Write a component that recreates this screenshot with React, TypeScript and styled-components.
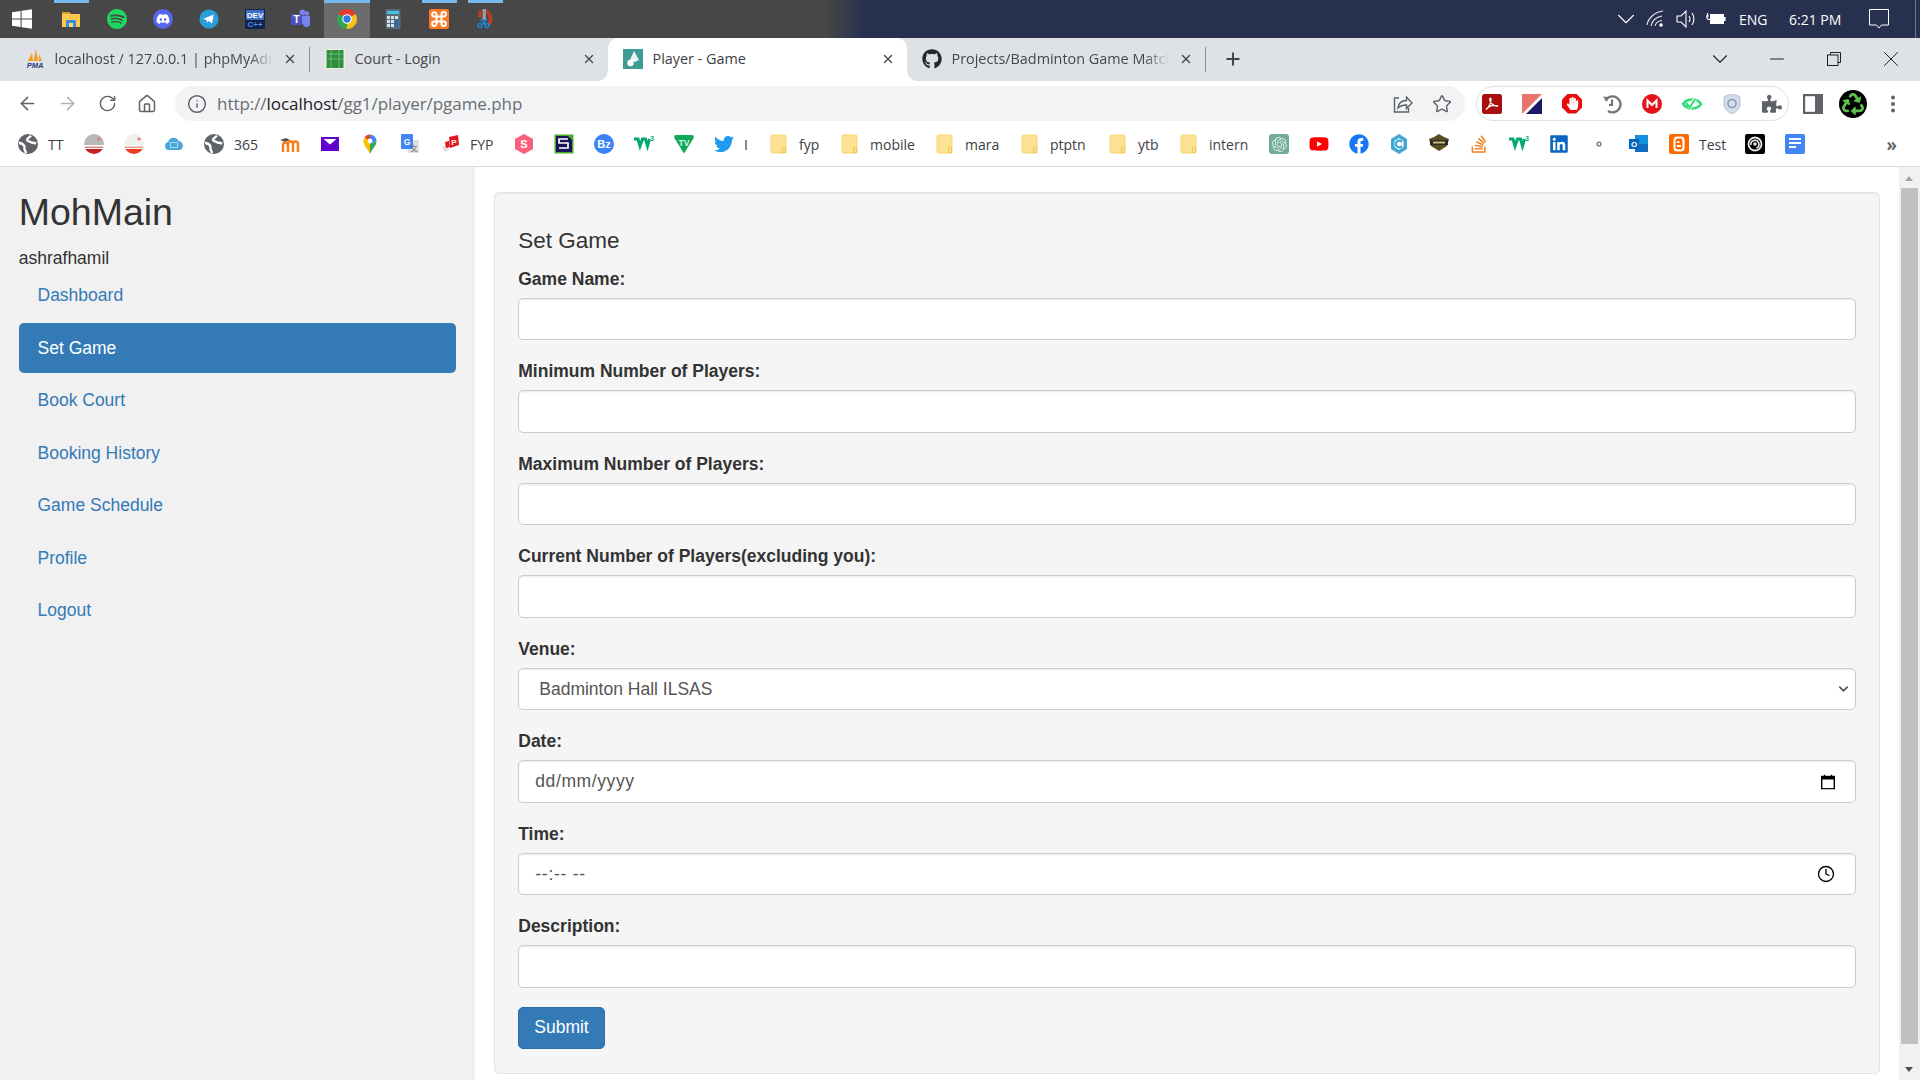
import React from "react";
import styled, { createGlobalStyle, css } from "styled-components";
import { ArrowLeft, ArrowRight, RotateCw, Home, Info, Star, X, Plus, ChevronDown, Minus, Clock } from "lucide-react";
import { FaGithub, FaTwitter, FaFacebook, FaYoutube, FaLinkedin, FaStackOverflow, FaPuzzlePiece, FaHandPaper, FaRecycle, FaDiscord } from "react-icons/fa";
import { SiSpotify, SiOpenai } from "react-icons/si";

const Global = createGlobalStyle`
  html, body { margin: 0; padding: 0; height: 100%; overflow: hidden; background: #fff; }
  * { box-sizing: border-box; }
  body { font-family: "Liberation Sans", Arial, sans-serif; color: #333; }
`;

const Shell = styled.div`
  display: flex;
  flex-direction: column;
  height: 100vh;
  overflow: hidden;
`;

/* ---------- OS taskbar ---------- */
const Taskbar = styled.div`
  display: flex;
  align-items: stretch;
  height: 38px;
  flex: none;
  background: linear-gradient(90deg, #474747 0, #474747 825px, #27314f 865px, #27304f 100%);
`;
const StartButton = styled.div`
  width: 48px;
  padding-right: 4px;
  display: flex;
  align-items: center;
  justify-content: center;
`;
const TaskItem = styled.div<{ $open?: boolean; $active?: boolean }>`
  position: relative;
  width: 46px;
  display: flex;
  align-items: center;
  justify-content: center;
  ${(p) => p.$active && css`background: #6b6b6b;`}
  ${(p) =>
    p.$open &&
    css`
      &::before {
        content: "";
        position: absolute;
        top: 0;
        left: ${p.$active ? "0" : "6px"};
        right: ${p.$active ? "0" : "5px"};
        height: 3px;
        background: #76b9ed;
      }
    `}
`;
const Tray = styled.div`
  margin-left: auto;
  display: flex;
  align-items: center;
  color: #fff;
  font-family: "Open Sans", sans-serif;
  font-size: 14px;
  padding-right: 4px;
`;
const TrayIcon = styled.span<{ $ml?: number }>`
  display: flex;
  width: 20px;
  justify-content: center;
  margin-left: ${(p) => p.$ml ?? 10}px;
`;
const TrayText = styled.span<{ $ml: number; $w: number }>`
  margin-left: ${(p) => p.$ml}px;
  width: ${(p) => p.$w}px;
  white-space: nowrap;
`;
const TrayEdge = styled.span`
  align-self: stretch;
  width: 1px;
  margin-left: 26px;
  background: #6f7689;
`;

/* ---------- Tabs ---------- */
const TabStrip = styled.div`
  display: flex;
  align-items: stretch;
  height: 43px;
  flex: none;
  background: #dee1e6;
  padding-left: 10px;
`;
const Tab = styled.div<{ $active?: boolean; $w: number }>`
  position: relative;
  width: ${(p) => p.$w}px;
  display: flex;
  align-items: center;
  padding: 0 12px 2px 14.5px;
  gap: 10px;
  font-family: "Open Sans", sans-serif;
  font-size: 14.4px;
  color: #45474a;
  ${(p) =>
    p.$active &&
    css`
      background: #fff;
      border-radius: 10px 10px 0 0;
      color: #3c4043;
      &::before,
      &::after {
        content: "";
        position: absolute;
        bottom: 0;
        width: 10px;
        height: 10px;
      }
      &::before {
        left: -10px;
        background: radial-gradient(circle at 0 0, #dee1e6 9.5px, #fff 10px);
      }
      &::after {
        right: -10px;
        background: radial-gradient(circle at 100% 0, #dee1e6 9.5px, #fff 10px);
      }
    `}
`;
const TabTitle = styled.span<{ $fade?: boolean }>`
  flex: 1;
  min-width: 0;
  white-space: nowrap;
  overflow: hidden;
  ${(p) =>
    p.$fade &&
    css`
      mask-image: linear-gradient(90deg, #000 calc(100% - 24px), transparent);
    `}
`;
const TabClose = styled.span`
  display: flex;
  color: #45474a;
  width: 14px;
  justify-content: center;
`;
const TabDivider = styled.span`
  width: 1px;
  height: 25px;
  margin-top: 9px;
  background: #8e9196;
  flex: none;
`;
const NewTab = styled.span`
  display: flex;
  align-items: center;
  margin-left: 17px;
  padding-bottom: 2px;
  color: #45474a;
`;
const WindowControls = styled.div`
  margin-left: auto;
  display: flex;
  align-items: stretch;
`;
const WinButton = styled.span<{ $w: number; $mr?: number }>`
  width: ${(p) => p.$w}px;
  margin-right: ${(p) => p.$mr ?? 0}px;
  padding-bottom: 2px;
  display: flex;
  align-items: center;
  justify-content: center;
  color: #222;
`;

/* ---------- Toolbar ---------- */
const Toolbar = styled.div`
  display: flex;
  align-items: center;
  height: 47px;
  flex: none;
  background: #fff;
  padding: 0 7px 2px;
`;
const NavButton = styled.span<{ $off?: boolean }>`
  width: 40px;
  display: flex;
  justify-content: center;
  color: ${(p) => (p.$off ? "#b0b3b7" : "#5f6368")};
`;
const Omnibox = styled.div`
  flex: 1;
  height: 35px;
  margin-left: 8px;
  display: flex;
  align-items: center;
  background: #f1f3f4;
  border-radius: 18px;
  padding: 0 13px 0 12px;
  color: #5f6368;
`;
const Url = styled.div`
  flex: 1;
  margin-left: 10px;
  font-family: "Open Sans", sans-serif;
  font-size: 17px;
  letter-spacing: -0.05px;
  color: #6a6d71;
  white-space: nowrap;
`;
const UrlHost = styled.span`
  color: #202124;
`;
const OmniAction = styled.span`
  display: flex;
  margin-left: 19px;
  color: #5f6368;
`;
const ExtensionPill = styled.div`
  margin-left: 11px;
  width: 313px;
  height: 35px;
  border: 1.5px solid #dfe1e5;
  border-radius: 18px;
  padding: 0 5px;
  display: flex;
  align-items: center;
  gap: 20px;
  margin-right: 4px;
`;

/* ---------- Bookmarks ---------- */
const BookmarkBar = styled.div`
  display: flex;
  align-items: center;
  height: 39px;
  flex: none;
  padding: 0 0 6px 8px;
  background: #fff;
  border-bottom: 1px solid #dadce0;
  font-family: "Open Sans", sans-serif;
  font-size: 14px;
  color: #3c4043;
`;
const Bookmark = styled.div`
  display: flex;
  align-items: center;
  padding: 0 10px;
  gap: 10px;
  flex: none;
`;
const BookmarkLabel = styled.span<{ $w: number }>`
  width: ${(p) => p.$w}px;
  white-space: nowrap;
`;
const MoreBookmarks = styled.span`
  margin-left: auto;
  padding-right: 23px;
  font-size: 17px;
  font-weight: 700;
  color: #5f6368;
`;

/* ---------- Round badge for logos ---------- */
const Badge = styled.span<{ $bg: string; $fg?: string; $r?: string; $size?: number }>`
  width: ${(p) => p.$size ?? 20}px;
  height: ${(p) => p.$size ?? 20}px;
  flex: none;
  display: flex;
  align-items: center;
  justify-content: center;
  background: ${(p) => p.$bg};
  color: ${(p) => p.$fg ?? "#fff"};
  border-radius: ${(p) => p.$r ?? "50%"};
`;
const OctagonBadge = styled(Badge)`
  border-radius: 0;
  clip-path: polygon(30% 0, 70% 0, 100% 30%, 100% 70%, 70% 100%, 30% 100%, 0 70%, 0 30%);
`;

/* ---------- Web page ---------- */
const Viewport = styled.div`
  flex: 1;
  min-height: 0;
  display: flex;
`;
const Sidebar = styled.aside`
  width: 474.75px;
  flex: none;
  background: #f1f1f1;
  padding: 25px 18.75px 0;
`;
const Brand = styled.h2`
  margin: 0 0 12.5px;
  font-size: 37.5px;
  line-height: 41.25px;
  font-weight: 500;
  color: #333;
`;
const UserName = styled.div`
  font-size: 17.5px;
  line-height: 25px;
  color: #333;
`;
const NavList = styled.ul`
  list-style: none;
  margin: 0;
  padding: 0;
  display: flex;
  flex-direction: column;
  gap: 2.5px;
`;
const NavLink = styled.a<{ $active?: boolean }>`
  display: block;
  padding: 12.5px 18.75px;
  font-size: 17.5px;
  line-height: 25px;
  border-radius: 5px;
  color: ${(p) => (p.$active ? "#fff" : "#337ab7")};
  background: ${(p) => (p.$active ? "#337ab7" : "transparent")};
`;
const Main = styled.main`
  flex: 1;
  min-width: 0;
  background: #fff;
  padding: 25px 18.75px 0;
`;
const Well = styled.section`
  background: #f5f5f5;
  border: 1.25px solid #e3e3e3;
  border-radius: 5px;
  box-shadow: inset 0 1.25px 1.25px rgba(0, 0, 0, 0.05);
  padding: 23.75px;
`;
const FormTitle = styled.h4`
  margin: 12.5px 0;
  font-size: 22.5px;
  line-height: 24.75px;
  font-weight: 500;
  color: #333;
`;
const FormGroup = styled.div`
  margin-bottom: 18.75px;
`;
const FieldLabel = styled.label`
  display: block;
  font-size: 17.5px;
  line-height: 25px;
  font-weight: 700;
  margin-bottom: 6.25px;
  color: #333;
`;
const FieldWrap = styled.div`
  position: relative;
`;
const fieldStyle = css`
  display: block;
  width: 100%;
  height: 42.5px;
  padding: 7.5px 15px;
  font-family: "Liberation Sans", Arial, sans-serif;
  font-size: 17.5px;
  color: #555;
  background: #fff;
  border: 1.25px solid #ccc;
  border-radius: 5px;
  box-shadow: inset 0 1.25px 1.25px rgba(0, 0, 0, 0.075);
  outline: none;
  &::placeholder {
    color: #555;
    opacity: 1;
  }
`;
const TextField = styled.input`
  ${fieldStyle}
`;
const TemporalField = styled.input<{ $spacing: number }>`
  ${fieldStyle}
  padding-left: 16px;
  letter-spacing: ${(p) => p.$spacing}px;
`;
const SelectField = styled.select`
  ${fieldStyle}
  appearance: none;
  padding-left: 20px;
`;
const FieldIcon = styled.span<{ $right: number; $color: string }>`
  position: absolute;
  top: 50%;
  right: ${(p) => p.$right}px;
  transform: translateY(-50%);
  display: flex;
  color: ${(p) => p.$color};
  pointer-events: none;
`;
const SubmitButton = styled.button`
  display: block;
  height: 42.5px;
  padding: 7.5px 15px;
  font-family: "Liberation Sans", Arial, sans-serif;
  font-size: 17.5px;
  color: #fff;
  background: #337ab7;
  border: 1.25px solid #2e6da4;
  border-radius: 5px;
`;
const ScrollTrack = styled.div`
  position: relative;
  width: 21px;
  flex: none;
  background: #f1f1f1;
`;
const ScrollThumb = styled.div`
  position: absolute;
  left: 2px;
  right: 2px;
  top: 21px;
  height: 856px;
  background: #c1c1c1;
`;
const ScrollArrow = styled.span<{ $dir: "up" | "down" }>`
  position: absolute;
  left: 6px;
  width: 0;
  height: 0;
  border-left: 4.5px solid transparent;
  border-right: 4.5px solid transparent;
  ${(p) =>
    p.$dir === "up"
      ? css`
          top: 9px;
          border-bottom: 5px solid #a3a3a3;
        `
      : css`
          bottom: 8px;
          border-top: 5px solid #505050;
        `}
`;

/* ---------- Drawn logos ---------- */
const Svg: React.FC<{ children: React.ReactNode; size?: number }> = ({ children, size = 20 }) => (
  <svg width={size} height={size} viewBox="0 0 20 20" style={{ flex: "none", display: "block" }}>
    {children}
  </svg>
);

const WindowsLogo = () => (
  <Svg>
    <g fill="#fff">
      <polygon points="0,3.2 8.6,2 8.6,9.6 0,9.6" />
      <polygon points="9.6,1.8 20,0.3 20,9.6 9.6,9.6" />
      <polygon points="0,10.6 8.6,10.6 8.6,18 0,16.8" />
      <polygon points="9.6,10.6 20,10.6 20,19.8 9.6,18.3" />
    </g>
  </Svg>
);
const ExplorerLogo = () => (
  <Svg>
    <path d="M1 3h7l2 2h9v13H1z" fill="#fcc94f" />
    <path d="M1 3h7l1.6 2H1z" fill="#d99e2c" />
    <rect x="5" y="11" width="10" height="7" fill="#3d8bd6" />
    <rect x="8" y="14" width="4" height="4" fill="#fcd97a" />
  </Svg>
);
const TelegramLogo = () => (
  <Svg>
    <circle cx="10" cy="10" r="9.6" fill="#2b9ed9" />
    <path d="M4 10l10.7-4.4-1.6 9-3.5-2.6-1.7 1.8-.3-2.9z" fill="#fff" />
  </Svg>
);
const DevLogo = () => (
  <Svg>
    <rect x="0" y="0" width="20" height="20" fill="#14224a" />
    <rect x="1" y="1" width="18" height="10" fill="#3f6fc4" />
    <text x="10" y="9" textAnchor="middle" fontSize="8" fontWeight="700" fontFamily="Liberation Sans" fill="#fff">DEV</text>
    <text x="10" y="17.5" textAnchor="middle" fontSize="8" fontWeight="700" fontFamily="Liberation Sans" fill="#4c8fe8">C++</text>
  </Svg>
);
const TeamsLogo = () => (
  <Svg>
    <circle cx="16" cy="4.5" r="2.2" fill="#7b83eb" />
    <circle cx="11.5" cy="3.5" r="3" fill="#7b83eb" />
    <path d="M10 7h9v7a3.5 3.5 0 0 1-7 1l-2-1z" fill="#7b83eb" />
    <rect x="0" y="5" width="11" height="11" rx="1" fill="#4b53bc" />
    <text x="5.5" y="14" textAnchor="middle" fontSize="10" fontWeight="700" fontFamily="Liberation Sans" fill="#fff">T</text>
  </Svg>
);
const ChromeLogo = () => (
  <Svg>
    <path d="M10 10L1.34 5A10 10 0 0 1 18.66 5z" fill="#e33b2e" />
    <path d="M10 10L18.66 5A10 10 0 0 1 10 20z" fill="#fbc116" />
    <path d="M10 10L10 20A10 10 0 0 1 1.34 5z" fill="#2fa84f" />
    <circle cx="10" cy="10" r="4.8" fill="#fff" />
    <circle cx="10" cy="10" r="3.7" fill="#2f7ee8" />
  </Svg>
);
const CalculatorLogo = () => (
  <Svg>
    <rect x="2.5" y="0" width="15" height="20" rx="1" fill="#5b6b79" />
    <rect x="4" y="2" width="12" height="3" fill="#3cc7ea" />
    <g fill="#d8dee3">
      {[4, 8, 12].flatMap((x) => [7, 11, 15].map((y) => <rect key={`${x}-${y}`} x={x} y={y} width="3" height="3" />))}
    </g>
    <rect x="12" y="11" width="3" height="7" fill="#1e6fb8" />
  </Svg>
);
const XamppLogo = () => (
  <Svg>
    <rect width="20" height="20" rx="2" fill="#fb7a24" />
    <path d="M7.5 7.5H6a2.2 2.2 0 1 1 1.500-2.200V14.700A2.200 2.200 0 1 1 5.300 12.500H14.700A2.200 2.200 0 1 1 12.500 14.700V5.300A2.200 2.200 0 1 1 14.700 7.500H7.500" fill="none" stroke="#fff" strokeWidth="2" />
  </Svg>
);
const SnipLogo = () => (
  <Svg>
    <path d="M8 1.2a9 9 0 0 1 6 14" fill="none" stroke="#c23a1e" strokeWidth="3.5" />
    <path d="M5 1.5v7" stroke="#c23a1e" strokeWidth="3" />
    <rect x="7.5" y="0" width="3.5" height="11" fill="#9a9a9a" />
    <path d="M5 10l5 5M12 10l-4 5" stroke="#1b86d6" strokeWidth="1.4" />
    <circle cx="5" cy="16.5" r="2" fill="none" stroke="#1b86d6" strokeWidth="1.6" />
    <circle cx="12" cy="16.5" r="2" fill="none" stroke="#1b86d6" strokeWidth="1.6" />
  </Svg>
);
const PmaLogo = () => (
  <Svg>
    <path d="M3 12L7 4l1 8zM8.5 12L11 0l2 12zM13.5 12L14 5l3 7z" fill="#f39a1f" />
    <text x="10" y="19" textAnchor="middle" fontSize="7.5" fontWeight="700" fontStyle="italic" fontFamily="Liberation Sans" fill="#25407a">PMA</text>
  </Svg>
);
const CourtLogo = () => (
  <Svg>
    <rect x="0" y="0" width="20" height="20" fill="#eef2d8" />
    <rect x="1.5" y="1" width="17" height="18" fill="#2e8f3e" />
    <path d="M1.5 5h17M1.5 10h17M6 1v18M14 1v18" stroke="#7cc785" strokeWidth=".8" />
  </Svg>
);
const ShuttleLogo = () => (
  <Svg>
    <rect width="20" height="20" fill="#3f9b94" />
    <path d="M11 2l5 9-4 2-5-2z" fill="#eaf4f2" />
    <circle cx="7.5" cy="14" r="3.2" fill="#fff" />
  </Svg>
);
const GlobeLogo = () => (
  <Svg>
    <circle cx="10" cy="10" r="10" fill="#5f6368" />
    <path d="M13 1.6c-1.4 2-3.6 2-4 4-.3 1.6 2.6 1.6 3.6 2.6 1 1 2.6 0 5.6 1.4M1 9c2.2 0 4.6 1.6 5.4 3.2.5 1-.6 2.6.4 3.8.6.7 1 2 1.2 3" fill="none" stroke="#fff" strokeWidth="2.4" />
  </Svg>
);
const SunsetLogo: React.FC<{ top: string; mid: string; bottom: string; pin: string }> = ({ top, mid, bottom, pin }) => (
  <Svg>
    <defs>
      <clipPath id={`clip-${pin.slice(1)}`}>
        <circle cx="10" cy="10" r="10" />
      </clipPath>
    </defs>
    <g clipPath={`url(#clip-${pin.slice(1)})`}>
      <rect width="20" height="11" fill={top} />
      <rect y="11" width="20" height="1.5" fill="#fff" />
      <rect y="12.5" width="20" height="1.5" fill={mid} />
      <rect y="14" width="20" height="1" fill="#fff" />
      <rect y="15" width="20" height="5" fill={bottom} />
    </g>
    <circle cx="15" cy="5" r="1.6" fill={pin} />
  </Svg>
);
const CloudLogo = () => (
  <Svg>
    <path d="M5 16a4 4 0 0 1-.8-7.9A5.5 5.5 0 0 1 14.6 7 4.6 4.6 0 0 1 15.5 16z" fill="#49a6dc" />
    <rect x="6.5" y="8.5" width="7" height="5" fill="none" stroke="#b6e0f5" strokeWidth=".9" />
  </Svg>
);
const MoodleLogo = () => (
  <Svg>
    <path d="M0 6l6-2 4 2-5 2z" fill="#555" />
    <path d="M3 18v-7c0-3 5-3 5 0v7M8 18v-8c0-3.6 5-3.4 5 0v8M13 18v-8c0-3.4 5-3.4 5 0v8" fill="none" stroke="#f58220" strokeWidth="2.6" />
  </Svg>
);
const MailLogo = () => (
  <Svg>
    <rect x="1" y="3" width="18" height="14" rx=".5" fill="#6001d2" />
    <path d="M3.500 5h13L10 10.500z" fill="#fff" />
  </Svg>
);
const MapsLogo = () => (
  <Svg>
    <path d="M10 20C8 15 3.5 12 3.5 7A6.5 6.5 0 0 1 10 .5z" fill="#fbbc04" />
    <path d="M10 20c2-5 6.5-8 6.5-13L10 9.5z" fill="#34a853" />
    <path d="M4.5 3 10 7.5 10 .5a6.5 6.5 0 0 0-5.5 2.5z" fill="#ea4335" />
    <path d="M10 .5a6.5 6.5 0 0 1 6.5 6.5L10 9.5z" fill="#4285f4" />
    <circle cx="10" cy="7" r="2.4" fill="#fff" />
  </Svg>
);
const TranslateLogo = () => (
  <Svg>
    <rect x="8" y="6" width="11" height="13" fill="#dfe1e3" />
    <rect x="1" y="0" width="12" height="15" rx="1" fill="#4285f4" />
    <text x="7" y="11" textAnchor="middle" fontSize="8.5" fontWeight="700" fontFamily="Liberation Sans" fill="#fff">G</text>
    <text x="14" y="16.5" textAnchor="middle" fontSize="7" fontFamily="Noto Sans CJK SC" fill="#666">文</text>
  </Svg>
);
const FypLogo = () => (
  <Svg>
    <path d="M2 13l5-2 2 5-4 2z" fill="#dfdfdf" />
    <path d="M9 3l9-2 1 10-9 3z" fill="#e3171e" />
    <text x="14" y="10.5" textAnchor="middle" fontSize="8" fontWeight="700" fontFamily="Liberation Sans" fill="#fff">P</text>
    <path d="M5 8l4-1 1 6-4 1z" fill="#e3171e" />
  </Svg>
);
const SHexLogo = () => (
  <Svg>
    <polygon points="10,0 19,5 19,15 10,20 1,15 1,5" fill="#f9607c" />
    <text x="10" y="14" textAnchor="middle" fontSize="11" fontWeight="700" fontFamily="Liberation Sans" fill="#fff">S</text>
  </Svg>
);
const SquareLogo = () => (
  <Svg>
    <rect x="0.5" y="0.5" width="19" height="19" fill="#4fa82b" />
    <polygon points="2,2 14,2 18,6 18,18 2,18" fill="#191657" />
    <path d="M14 5H5v4h9v5H5" fill="none" stroke="#fff" strokeWidth="1.7" />
  </Svg>
);
const W3Logo = () => (
  <Svg>
    <path d="M0 5h4l2 7 2.5-7h3l2 7 2-7" fill="none" stroke="#04aa6d" strokeWidth="3" />
    <text x="18" y="7" textAnchor="middle" fontSize="6.5" fontWeight="700" fontFamily="Liberation Sans" fill="#04aa6d">3</text>
  </Svg>
);
const TvLogo = () => (
  <Svg>
    <path d="M2 1h16c1.5 0 2 1 1.7 3L10 19.5.3 4C0 2 .5 1 2 1z" fill="#0fa958" />
    <text x="10" y="11.5" textAnchor="middle" fontSize="8.5" fontWeight="700" fontFamily="Liberation Sans" fill="#d9f5e4">TV</text>
  </Svg>
);
const FolderLogo = () => (
  <Svg>
    <rect x="2" y="1" width="15" height="18" rx="1.5" fill="#fde293" stroke="#f7d572" />
    <rect x="13.5" y="14" width="3" height="4.5" fill="#fde293" stroke="#f2c94c" />
  </Svg>
);
const CHexLogo = () => (
  <Svg>
    <polygon points="10,0 18,5 18,15 10,20 2,15 2,5" fill="#3fa7d6" />
    <polygon points="10,4 14.6,7 14.6,13 10,16 5.4,13 5.4,7" fill="#fff" />
    <path d="M13 8a3.4 3.4 0 1 0 0 4" fill="none" stroke="#3fa7d6" strokeWidth="2.2" />
  </Svg>
);
const RankBadge = () => (
  <Svg>
    <path d="M10 0l5 3 5 2-2 7-8 5-8-5-2-7 5-2z" fill="#5a4d1e" />
    <rect x="1" y="6" width="18" height="5" fill="#2b2b2b" />
    <rect x="4" y="7.5" width="12" height="2" fill="#c9b870" />
  </Svg>
);
const TinyDot = () => (
  <Svg>
    <circle cx="10" cy="10" r="2.6" fill="#777" />
    <circle cx="10" cy="10" r="1.2" fill="#fff" />
  </Svg>
);
const OutlookLogo = () => (
  <Svg>
    <rect x="6" y="1" width="13" height="17" fill="#1490df" />
    <path d="M6 10h13v8H6z" fill="#0f6cbd" />
    <rect x="0" y="5" width="10" height="10" fill="#0364b8" />
    <text x="5" y="13" textAnchor="middle" fontSize="8" fontWeight="700" fontFamily="Liberation Sans" fill="#fff">O</text>
  </Svg>
);
const BloggerLogo = () => (
  <Svg>
    <rect width="20" height="20" rx="2" fill="#ff6a00" />
    <rect x="5.500" y="3.500" width="9" height="13" rx="3" fill="none" stroke="#fff" strokeWidth="2.200" />
    <path d="M8 8.200h2.500M8 12h4" stroke="#fff" strokeWidth="1.800" />
  </Svg>
);
const SwirlLogo = () => (
  <Svg>
    <rect width="20" height="20" rx="2" fill="#000" />
    <circle cx="10" cy="10" r="6.5" fill="none" stroke="#e8e8e8" strokeWidth="1.8" />
    <path d="M6 11a4 4 0 1 1 5.5 3" fill="none" stroke="#e8e8e8" strokeWidth="1.6" />
    <circle cx="10" cy="10" r="1.8" fill="#e8e8e8" />
  </Svg>
);
const DocsLogo = () => (
  <Svg>
    <rect width="20" height="20" rx="2" fill="#4285f4" />
    <path d="M4 5h12M4 9h12M4 13h7" stroke="#fff" strokeWidth="2" />
  </Svg>
);
const AcrobatLogo = () => (
  <Svg>
    <rect width="20" height="20" rx="2.500" fill="#a90f0f" />
    <path d="M4 15.500c3-1.500 5-7 5-10 0-1.800-1.200-1.800-1.200 0 0 3.500 4 7.200 8.200 6.500-3.800-1.200-8.800-.5-12 3.500z" fill="none" stroke="#fff" strokeWidth="1.300" />
  </Svg>
);
const SplitLogo = () => (
  <Svg>
    <polygon points="0,0 20,0 0,20" fill="#e8756c" />
    <polygon points="20,4 20,20 4,20" fill="#1a1a66" />
  </Svg>
);
const ClockBackLogo = () => (
  <Svg>
    <path d="M3.5 6.5A8 8 0 1 1 6 17" fill="none" stroke="#757575" strokeWidth="2.4" />
    <path d="M1 2.5l5 .5-1 5z" fill="#757575" />
    <path d="M10 5.5V11H7" fill="none" stroke="#757575" strokeWidth="2.2" />
  </Svg>
);
const VpnEye = () => (
  <Svg>
    <path d="M1 10c4-6 14-6 18 0-4 6-14 6-18 0z" fill="none" stroke="#2fdc7a" strokeWidth="2.4" />
    <path d="M7 15l6-10" stroke="#fff" strokeWidth="4" />
    <path d="M7 15l6-10" stroke="#2fdc7a" strokeWidth="2" />
    <path d="M4 9l3 4" stroke="#2fdc7a" strokeWidth="2.4" />
  </Svg>
);
const ShieldLogo = () => (
  <Svg>
    <path d="M10 0l8 2.5V10c0 5-4 8-8 10-4-2-8-5-8-10V2.5z" fill="#d4dcea" stroke="#a9b7cf" strokeWidth=".8" />
    <circle cx="10" cy="9.5" r="4" fill="none" stroke="#8a9bb8" strokeWidth="1.6" />
  </Svg>
);
const MegaLogo = () => (
  <Svg>
    <circle cx="10" cy="10" r="10" fill="#e3131b" />
    <path d="M5.5 14V6.5L10 11l4.5-4.5V14" fill="none" stroke="#fff" strokeWidth="2" />
  </Svg>
);
const SidePanelLogo = () => (
  <Svg>
    <rect x="1" y="1" width="18" height="18" fill="none" stroke="#5f6368" strokeWidth="2.4" />
    <rect x="12" y="1" width="7" height="18" fill="#5f6368" />
  </Svg>
);
const ShareLogo = () => (
  <Svg>
    <path d="M6 4H1.5v14h14v-4" fill="none" stroke="#5f6368" strokeWidth="1.4" />
    <path d="M5 14c.5-5 4-7.5 8.5-7.5V3l5.5 6-5.5 5.5V11C10 11 7 12 5 14z" fill="none" stroke="#5f6368" strokeWidth="1.4" />
  </Svg>
);
const WifiLogo = () => (
  <Svg>
    <path d="M1 16C2 9 9 3 17 2M5 17c1-5 5-9 11-10M9 17c.6-2.6 3-5 7-5.500" fill="none" stroke="#e8eaf0" strokeWidth="1.1" />
    <circle cx="15" cy="16" r="1.8" fill="#fff" />
  </Svg>
);
const SpeakerLogo = () => (
  <Svg>
    <path d="M1 7h4l5-5v16l-5-5H1z" fill="none" stroke="#fff" strokeWidth="1.1" />
    <path d="M13 7c1.400 2 1.400 4 0 6M16 4c2.600 4 2.600 8 0 12" fill="none" stroke="#fff" strokeWidth="1.1" />
  </Svg>
);
const BatteryLogo = () => (
  <Svg>
    <rect x="4" y="5" width="14" height="10" fill="#fff" />
    <rect x="18" y="8" width="1.600" height="4" fill="#fff" />
    <path d="M0 7h3M1.500 4v3M1 7v2c0 1 1 1.500 3 1.500" fill="none" stroke="#fff" strokeWidth="1.2" />
  </Svg>
);
const NotificationLogo = () => (
  <Svg>
    <path d="M.5 .5h19v15.500h-7L10 19l-2.500-3H.5z" fill="none" stroke="#fff" strokeWidth="1" />
  </Svg>
);
const RestoreLogo = () => (
  <svg width="14" height="14" viewBox="0 0 14 14" style={{ display: "block" }}>
    <path d="M3.500 3V.5h10v10H11" fill="none" stroke="#222" strokeWidth="1" />
    <rect x=".5" y="3" width="10.500" height="10.500" fill="none" stroke="#222" strokeWidth="1" />
  </svg>
);
const DateIcon = () => (
  <svg width="14" height="15" viewBox="0 0 14 15" style={{ display: "block" }}>
    <rect x=".7" y="2" width="12.600" height="12.300" fill="none" stroke="#000" strokeWidth="1.400" />
    <rect x=".7" y="2" width="12.600" height="3" fill="#000" />
    <path d="M3.500 0v2M10.500 0v2" stroke="#000" strokeWidth="1.400" />
  </svg>
);

/* ---------- Data ---------- */
type Mark = { icon: React.ReactNode; label?: string; w?: number };

const taskApps: { icon: React.ReactNode; open?: boolean; active?: boolean }[] = [
  { icon: <ExplorerLogo />, open: true },
  { icon: <SiSpotify size={20} color="#1ed760" /> },
  { icon: <Badge $bg="#5865f2"><FaDiscord size={14} /></Badge> },
  { icon: <TelegramLogo /> },
  { icon: <DevLogo /> },
  { icon: <TeamsLogo /> },
  { icon: <ChromeLogo />, open: true, active: true },
  { icon: <CalculatorLogo /> },
  { icon: <XamppLogo />, open: true },
  { icon: <SnipLogo />, open: true },
];

const bookmarks: Mark[] = [
  { icon: <GlobeLogo />, label: "TT", w: 16 },
  { icon: <SunsetLogo top="#b8b8b8" mid="#d88" bottom="#c41e22" pin="#e07a70" /> },
  { icon: <SunsetLogo top="#f0f0f0" mid="#f09a88" bottom="#e8401f" pin="#e8775f" /> },
  { icon: <CloudLogo /> },
  { icon: <GlobeLogo />, label: "365", w: 26 },
  { icon: <MoodleLogo /> },
  { icon: <MailLogo /> },
  { icon: <MapsLogo /> },
  { icon: <TranslateLogo /> },
  { icon: <FypLogo />, label: "FYP", w: 24 },
  { icon: <SHexLogo /> },
  { icon: <SquareLogo /> },
  { icon: <Badge $bg="#3b82f6"><b style={{ fontSize: 11, fontFamily: "Liberation Sans" }}>Bz</b></Badge> },
  { icon: <W3Logo /> },
  { icon: <TvLogo /> },
  { icon: <FaTwitter size={20} color="#1d9bf0" />, label: "I", w: 5 },
  { icon: <FolderLogo />, label: "fyp", w: 21 },
  { icon: <FolderLogo />, label: "mobile", w: 45 },
  { icon: <FolderLogo />, label: "mara", w: 35 },
  { icon: <FolderLogo />, label: "ptptn", w: 38 },
  { icon: <FolderLogo />, label: "ytb", w: 21 },
  { icon: <FolderLogo />, label: "intern", w: 40 },
  { icon: <Badge $bg="#74aa9c" $r="3px"><SiOpenai size={15} color="#d8ece6" /></Badge> },
  { icon: <FaYoutube size={20} color="#ff0000" /> },
  { icon: <FaFacebook size={20} color="#1877f2" /> },
  { icon: <CHexLogo /> },
  { icon: <RankBadge /> },
  { icon: <FaStackOverflow size={20} color="#f48024" /> },
  { icon: <W3Logo /> },
  { icon: <FaLinkedin size={20} color="#0a66c2" /> },
  { icon: <TinyDot /> },
  { icon: <OutlookLogo /> },
  { icon: <BloggerLogo />, label: "Test", w: 26 },
  { icon: <SwirlLogo /> },
  { icon: <DocsLogo /> },
];

const tabs = [
  { icon: <PmaLogo />, title: "localhost / 127.0.0.1 | phpMyAdmin", w: 299, fade: true },
  { icon: <CourtLogo />, title: "Court - Login", w: 298 },
  { icon: <ShuttleLogo />, title: "Player - Game", w: 299, active: true },
  { icon: <FaGithub size={20} color="#24292f" />, title: "Projects/Badminton Game Matching", w: 298, fade: true },
];

const extensions = [
  <AcrobatLogo key="pdf" />,
  <SplitLogo key="split" />,
  <OctagonBadge key="block" $bg="#e60c0c"><FaHandPaper size={13} /></OctagonBadge>,
  <ClockBackLogo key="hist" />,
  <MegaLogo key="mega" />,
  <VpnEye key="eye" />,
  <ShieldLogo key="shield" />,
  <FaPuzzlePiece key="puzzle" size={20} color="#5f6368" />,
];

const navItems = ["Dashboard", "Set Game", "Book Court", "Booking History", "Game Schedule", "Profile", "Logout"];

const textFields = ["Game Name:", "Minimum Number of Players:", "Maximum Number of Players:", "Current Number of Players(excluding you):"];

export default function App() {
  return (
    <Shell>
      <Global />
      <Taskbar>
        <StartButton><WindowsLogo /></StartButton>
        {taskApps.map((a, i) => (
          <TaskItem key={i} $open={a.open} $active={a.active}>{a.icon}</TaskItem>
        ))}
        <Tray>
          <TrayIcon><ChevronDown size={30} strokeWidth={0.9} style={{ flex: "none" }} /></TrayIcon>
          <TrayIcon><WifiLogo /></TrayIcon>
          <TrayIcon><SpeakerLogo /></TrayIcon>
          <TrayIcon><BatteryLogo /></TrayIcon>
          <TrayText $ml={13} $w={29}>ENG</TrayText>
          <TrayText $ml={21} $w={51}>6:21 PM</TrayText>
          <TrayIcon $ml={29}><NotificationLogo /></TrayIcon>
          <TrayEdge />
        </Tray>
      </Taskbar>

      <TabStrip>
        {tabs.map((t, i) => (
          <React.Fragment key={t.title}>
            <Tab $active={t.active} $w={t.w}>
              {t.icon}
              <TabTitle $fade={t.fade}>{t.title}</TabTitle>
              <TabClose><X size={16} strokeWidth={2.4} /></TabClose>
            </Tab>
            {(i === 0 || i === 3) && <TabDivider />}
          </React.Fragment>
        ))}
        <NewTab><Plus size={20} strokeWidth={2.4} /></NewTab>
        <WindowControls>
          <WinButton $w={40} $mr={8}><ChevronDown size={26} strokeWidth={1} /></WinButton>
          <WinButton $w={57}><Minus size={22} strokeWidth={1.1} /></WinButton>
          <WinButton $w={57}><RestoreLogo /></WinButton>
          <WinButton $w={58}><X size={26} strokeWidth={0.9} /></WinButton>
        </WindowControls>
      </TabStrip>

      <Toolbar>
        <NavButton><ArrowLeft size={21} strokeWidth={1.8} /></NavButton>
        <NavButton $off><ArrowRight size={21} strokeWidth={1.8} /></NavButton>
        <NavButton><RotateCw size={19} strokeWidth={1.8} /></NavButton>
        <NavButton><Home size={20} strokeWidth={1.8} /></NavButton>
        <Omnibox>
          <Info size={20} strokeWidth={1.8} />
          <Url>http://<UrlHost>localhost</UrlHost>/gg1/player/pgame.php</Url>
          <OmniAction><ShareLogo /></OmniAction>
          <OmniAction><Star size={20} strokeWidth={1.7} /></OmniAction>
        </Omnibox>
        <ExtensionPill>{extensions}</ExtensionPill>
        <NavButton><SidePanelLogo /></NavButton>
        <NavButton>
          <Badge $bg="#000" $fg="#5cc24a" $size={28}><FaRecycle size={22} /></Badge>
        </NavButton>
        <NavButton>
          <svg width="6" height="20" viewBox="0 0 6 20"><g fill="#5f6368"><circle cx="3" cy="3.500" r="2" /><circle cx="3" cy="10" r="2" /><circle cx="3" cy="16.500" r="2" /></g></svg>
        </NavButton>
      </Toolbar>

      <BookmarkBar>
        {bookmarks.map((b, i) => (
          <Bookmark key={i}>
            {b.icon}
            {b.label && <BookmarkLabel $w={b.w ?? 0}>{b.label}</BookmarkLabel>}
          </Bookmark>
        ))}
        <MoreBookmarks>»</MoreBookmarks>
      </BookmarkBar>

      <Viewport>
        <Sidebar>
          <Brand>MohMain</Brand>
          <UserName>ashrafhamil</UserName>
          <NavList>
            {navItems.map((n) => (
              <li key={n}>
                <NavLink $active={n === "Set Game"}>{n}</NavLink>
              </li>
            ))}
          </NavList>
        </Sidebar>
        <Main>
          <Well>
            <FormTitle>Set Game</FormTitle>
            {textFields.map((f) => (
              <FormGroup key={f}>
                <FieldLabel>{f}</FieldLabel>
                <TextField type="text" />
              </FormGroup>
            ))}
            <FormGroup>
              <FieldLabel>Venue:</FieldLabel>
              <FieldWrap>
                <SelectField defaultValue="ilsas">
                  <option value="ilsas">Badminton Hall ILSAS</option>
                </SelectField>
                <FieldIcon $right={5} $color="#555"><ChevronDown size={15} strokeWidth={2.6} /></FieldIcon>
              </FieldWrap>
            </FormGroup>
            <FormGroup>
              <FieldLabel>Date:</FieldLabel>
              <FieldWrap>
                <TemporalField $spacing={0.6} type="text" placeholder="dd/mm/yyyy" />
                <FieldIcon $right={21} $color="#000"><DateIcon /></FieldIcon>
              </FieldWrap>
            </FormGroup>
            <FormGroup>
              <FieldLabel>Time:</FieldLabel>
              <FieldWrap>
                <TemporalField $spacing={0.75} type="text" placeholder="--:-- --" />
                <FieldIcon $right={21} $color="#000"><Clock size={18} strokeWidth={1.8} /></FieldIcon>
              </FieldWrap>
            </FormGroup>
            <FormGroup>
              <FieldLabel>Description:</FieldLabel>
              <TextField type="text" />
            </FormGroup>
            <SubmitButton type="button">Submit</SubmitButton>
          </Well>
        </Main>
        <ScrollTrack>
          <ScrollArrow $dir="up" />
          <ScrollThumb />
          <ScrollArrow $dir="down" />
        </ScrollTrack>
      </Viewport>
    </Shell>
  );
}
